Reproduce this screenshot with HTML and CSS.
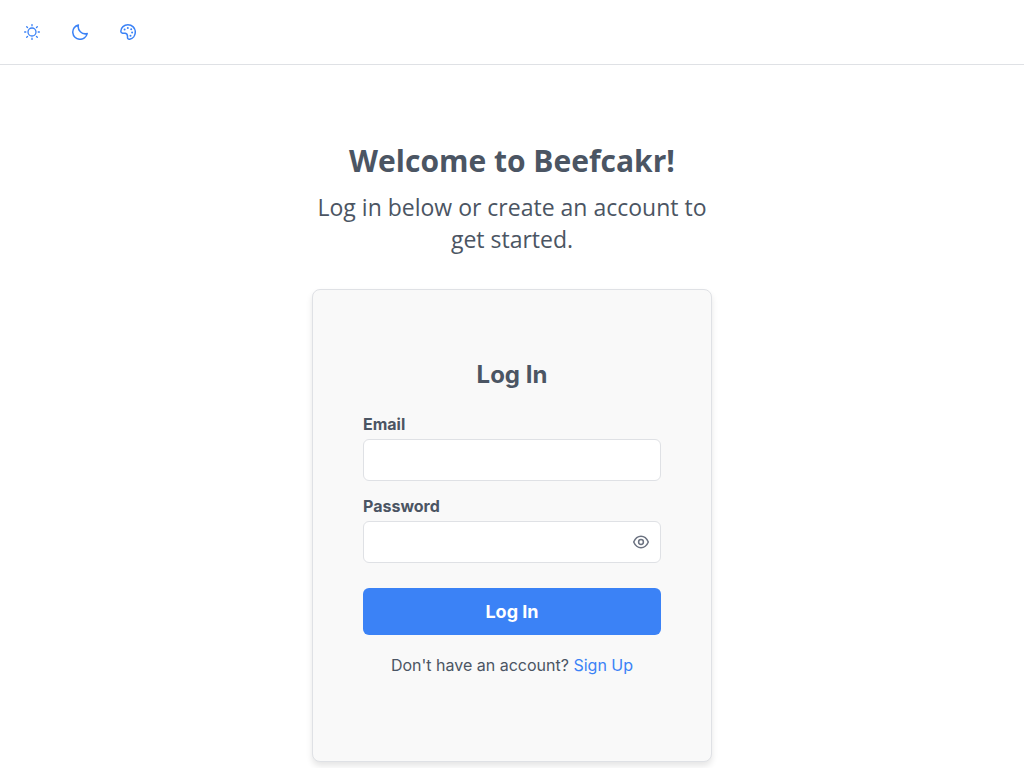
FILE: index.html
```html
<!DOCTYPE html>
<html lang="en">
<head>
  <meta charset="UTF-8">
  <meta name="viewport" content="width=device-width, initial-scale=1.0">
  <title>Beefcakr</title>
  <link rel="stylesheet" href="styles.css">
</head>
<body>

  <!-- Theme buttons -->
  <header class="topbar">
    <button type="button" class="icon-btn" aria-label="Light theme">
      <svg width="16" height="16" viewBox="0 0 16 16">
        <circle cx="8" cy="8" r="4"/>
        <path d="M8 .6v1.2M8 14.2v1.2M.6 8h1.2M14.2 8h1.2M2.7 2.7l.8.8M12.5 12.5l.8.8M2.7 13.3l.8-.8M12.5 3.5l.8-.8"/>
      </svg>
    </button>
    <button type="button" class="icon-btn" aria-label="Dark theme">
      <svg width="16" height="16" viewBox="0 0 16 16">
        <path class="thick" d="M6.400.9A7.300 7.300 0 1 0 15.200 9.600A7.200 7.200 0 0 1 6.400.9z"/>
      </svg>
    </button>
    <button type="button" class="icon-btn" aria-label="Choose colors">
      <svg width="16" height="16" viewBox="0 0 16 16">
        <path class="thick" d="M.8 7.200C1 3.500 4 .8 7.900.8c4.200 0 7.400 3.200 7.400 7.200 0 3.600-2.400 6.600-5.600 7.200-1.500.2-2.300-.6-2.200-2 .2-2-.6-3.600-2.200-4-1-.2-1.800.2-2.700 0C1.300 8.900.8 8.200.8 7.200z"/>
        <g class="dots">
          <circle cx="4.600" cy="5.600" r="1"/>
          <circle cx="7.800" cy="4" r="1"/>
          <circle cx="11.200" cy="5.300" r="1"/>
          <circle cx="12.100" cy="8.500" r="1"/>
          <circle cx="10.500" cy="11.700" r="1"/>
        </g>
      </svg>
    </button>
  </header>

  <main class="page">
    <div class="intro">
      <h1>Welcome to Beefcakr!</h1>
      <p>Log in below or create an account to get started.</p>
    </div>

    <!-- Login card -->
    <form class="card">
      <h2>Log In</h2>

      <div class="field">
        <label for="email">Email</label>
        <input type="email" id="email">
      </div>

      <div class="field">
        <label for="password">Password</label>
        <div class="password-box">
          <input type="password" id="password">
          <button type="button" class="eye-btn" aria-label="Show password">
            <svg width="16" height="16" viewBox="0 0 16 16">
              <path d="M.7 8C2.300 4.300 4.900 2.300 8 2.300S13.700 4.300 15.300 8C13.700 11.700 11.100 13.700 8 13.700S2.300 11.700.7 8z"/>
              <circle cx="8" cy="8" r="2.400"/>
            </svg>
          </button>
        </div>
      </div>

      <button type="submit" class="login-btn">Log In</button>
      <p class="signup">Don't have an account? <a href="#">Sign Up</a></p>
    </form>
  </main>

</body>
</html>
```
FILE: styles.css
```css
* {
  box-sizing: border-box;
}

body {
  margin: 0;
  min-height: 100vh;
  background: #ffffff;
  color: #4b5563;
  font-family: Inter, sans-serif;
  font-size: 16px;
  line-height: 20px;
}

h1, h2, p {
  margin: 0;
}

button, input {
  font-family: inherit;
  font-size: 16px;
}

button {
  cursor: pointer;
}

svg {
  display: block;
  fill: none;
  stroke: currentColor;
  stroke-width: 1.3;
  stroke-linecap: round;
  stroke-linejoin: round;
}

.topbar {
  display: flex;
  padding: 8px;
  border-bottom: 1px solid #dfe1e5;
}

.icon-btn {
  padding: 16px;
  border: none;
  background: none;
  color: #3b82f6;
}

.thick {
  stroke-width: 1.5;
}

.dots {
  fill: currentColor;
  stroke: none;
}

.page {
  max-width: 400px;
  margin: 0 auto;
  padding: 76px 0 6px;
}

.intro {
  margin-bottom: 34px;
  font-family: "Open Sans", sans-serif;
  text-align: center;
}

.intro h1 {
  margin-bottom: 10px;
  font-size: 30px;
  line-height: 40px;
}

.intro p {
  font-size: 23px;
  line-height: 32px;
}

.card {
  padding: 70px 50px 86px;
  background: #f9f9f9;
  border: 1px solid #dfe1e5;
  border-radius: 8px;
  box-shadow: 0 4px 6px rgba(0, 0, 0, 0.1);
}

.card h2 {
  margin-bottom: 24px;
  font-size: 24px;
  line-height: 30px;
  text-align: center;
}

.field {
  margin-bottom: 15px;
}

.field label {
  display: block;
  margin-bottom: 5px;
  font-weight: bold;
}

.field input {
  display: block;
  width: 100%;
  height: 42px;
  padding: 8px 12px;
  border: 1px solid #dfe1e5;
  border-radius: 6px;
  background: #ffffff;
  color: #4b5563;
}

.password-box {
  position: relative;
}

.password-box input {
  padding-right: 40px;
}

.eye-btn {
  position: absolute;
  top: 5px;
  right: 4px;
  padding: 8px;
  border: none;
  background: none;
  color: #6b7280;
}

.eye-btn svg {
  stroke-width: 1.5;
}

.login-btn {
  width: 100%;
  height: 47px;
  margin-top: 10px;
  border: none;
  border-radius: 6px;
  background: #3b82f6;
  color: #ffffff;
  font-size: 18px;
  font-weight: bold;
}

.signup {
  margin-top: 20px;
  text-align: center;
}

.signup a {
  color: #3b82f6;
  text-decoration: none;
}
```
